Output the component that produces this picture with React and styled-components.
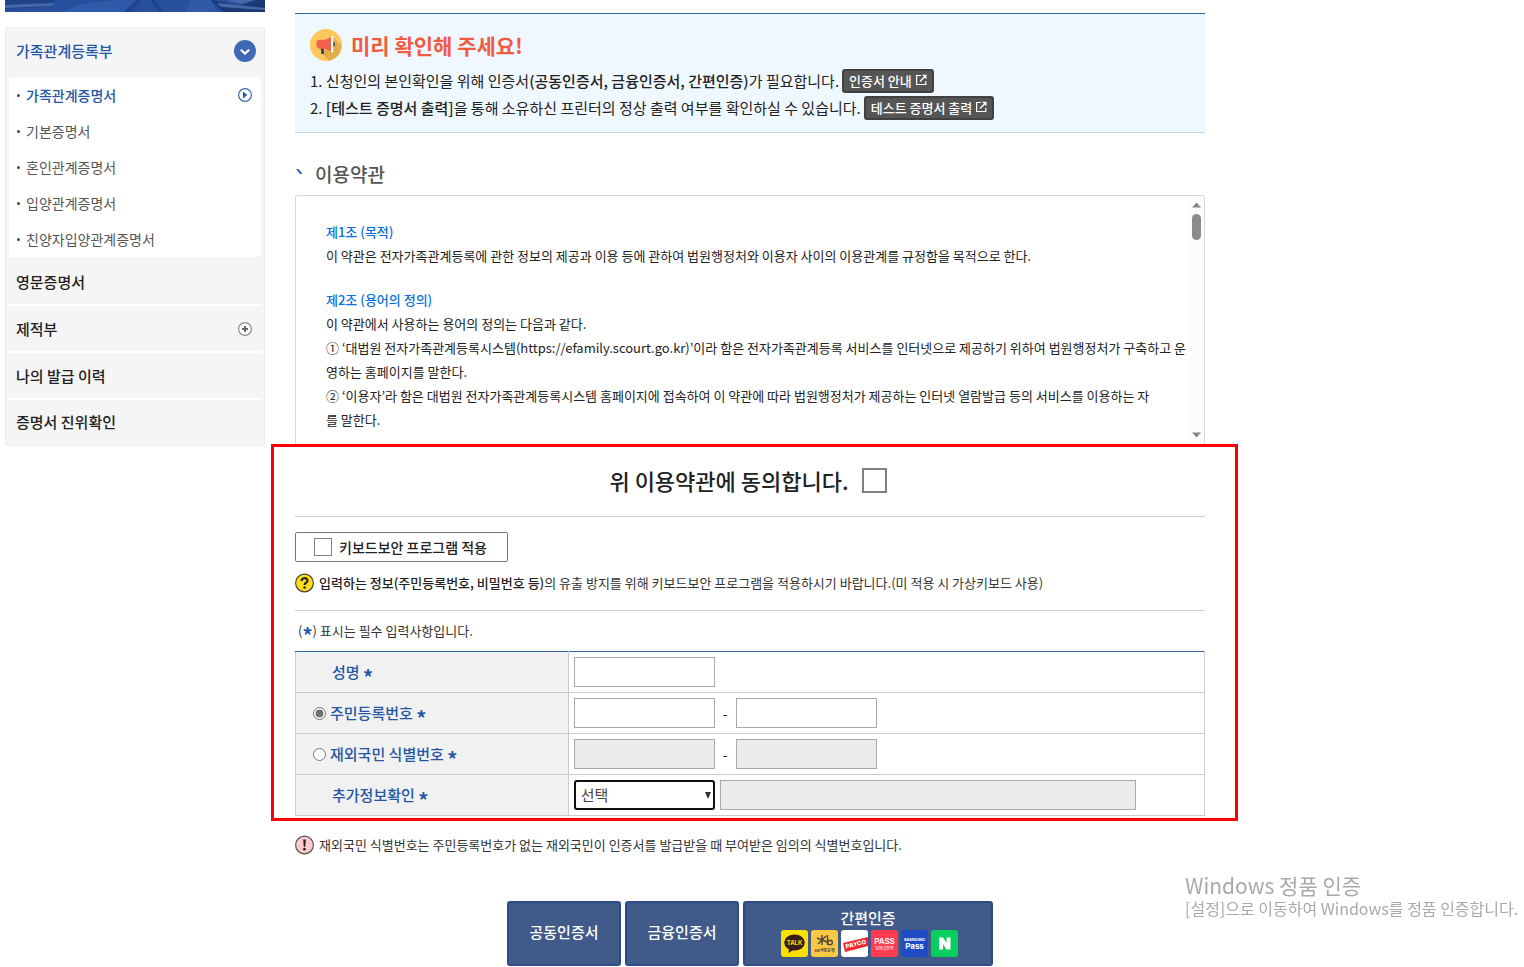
import React, { useState } from "react";
import styled, { createGlobalStyle } from "styled-components";

const blue = "#2456a4";
const line = "#cccccc";

const GlobalStyle = createGlobalStyle`
  * {
    box-sizing: border-box;
  }

  body {
    margin: 0;
    background: #ffffff;
    color: #222222;
    font-family: "Noto Sans CJK KR", "Noto Sans", sans-serif;
    font-size: 14px;
    line-height: 24px;
    word-break: break-all;
  }

  button,
  input,
  select {
    font: inherit;
    color: inherit;
  }

  ul,
  ol,
  h2,
  h3,
  p {
    margin: 0;
    padding: 0;
    list-style: none;
  }
`;

const Page = styled.div`
  display: flex;
  align-items: flex-start;
  gap: 30px;
  padding: 0 5px;
`;

/* ---------- sidebar ---------- */

const Sidebar = styled.aside`
  flex: 0 0 260px;
`;

const Banner = styled.svg`
  display: block;
  width: 100%;
  height: 12px;
  margin-bottom: 15px;
`;

const Menu = styled.nav`
  padding: 0 2px;
  border: 1px solid #eeeeee;
  background: #f5f5f5;
`;

const MenuLink = styled.a`
  display: flex;
  align-items: center;
  justify-content: space-between;
  height: ${(p) => (p.$open ? 49 : 47)}px;
  padding: ${(p) => (p.$open ? "0 6px 4px 8px" : "0 8px")};
  border-bottom: ${(p) => (p.$open ? "none" : "2px solid #ffffff")};
  color: ${(p) => (p.$open ? blue : "#222222")};
  font-size: 15px;
  font-weight: 500;
  text-decoration: none;
`;

const LastItem = styled.li`
  ${MenuLink} {
    height: 45px;
    padding-bottom: 2px;
    border-bottom: none;
  }
`;

const SubMenu = styled.ul`
  margin: 0 1px 2px;
  border-radius: 2px;
  background: #ffffff;
`;

const SubLink = styled.a`
  display: flex;
  align-items: center;
  height: 36px;
  padding: 0 9px 0 8px;
  color: ${(p) => (p.$active ? blue : "#555555")};
  font-weight: ${(p) => (p.$active ? 500 : 400)};
  text-decoration: none;

  &::before {
    content: "";
    width: 3px;
    height: 3px;
    margin-right: 6px;
    border-radius: 50%;
    background: #444444;
  }

  svg {
    margin-left: auto;
  }
`;

const PlusSlot = styled.span`
  display: flex;
  padding-right: 2px;
`;

/* ---------- content ---------- */

const Content = styled.main`
  flex: 0 1 910px;
  min-width: 0;
  padding-top: 13px;
`;

const Notice = styled.section`
  padding: 15px 15px 11px;
  border-top: 1px solid #3567a8;
  border-bottom: 1px solid #c6daef;
  background: #f0f8ff;
`;

const NoticeTitle = styled.h2`
  display: flex;
  align-items: center;
  gap: 9px;
  margin-bottom: 6px;
  color: #f15b40;
  font-size: 21px;
  font-weight: 700;
  line-height: 32px;
`;

const NoticeLine = styled.li`
  display: flex;
  align-items: center;
  gap: 3px;
  height: 27px;
  font-size: 15px;

  b {
    font-weight: 500;
  }
`;

const DarkButton = styled.button`
  display: inline-flex;
  align-items: center;
  gap: 4px;
  height: 24px;
  padding: 0 5px;
  border: 2px solid #414141;
  border-radius: 3px;
  background: #555555;
  color: #ffffff;
  font-size: 13px;
  font-weight: 500;
  line-height: 20px;
  white-space: nowrap;
`;

const SectionTitle = styled.h3`
  display: flex;
  gap: 13px;
  margin: 27px 0 7px;
  color: #555555;
  font-size: 19px;
  font-weight: 500;
  line-height: 28px;

  svg {
    margin: 9px 0 0 1px;
  }
`;

const Terms = styled.div`
  display: flex;
  height: 249px;
  border: 1px solid #d8d8d8;
  border-bottom: none;
  border-radius: 3px 3px 0 0;
`;

const TermsText = styled.div`
  flex: 1;
  padding: 24px 2px 0 30px;
  overflow: hidden;
  font-size: 13px;

  h3 {
    color: #0a6fe0;
    font-size: 13px;
    font-weight: 500;
  }

  p + h3 {
    margin-top: 20px;
  }
`;

const Rail = styled.div`
  display: flex;
  flex-direction: column;
  align-items: center;
  width: 15px;
  padding: 6px 0;
  background: #fcfcfc;
`;

const Thumb = styled.div`
  width: 9px;
  height: 26px;
  margin: 6px 0 auto;
  border-radius: 5px;
  background: #8b8b8b;
`;

const Highlight = styled.section`
  margin: 0 -33px 0 -24px;
  padding: 0 30px 2px 21px;
  border: 3px solid #fb0007;
`;

const Agree = styled.label`
  display: flex;
  align-items: center;
  justify-content: center;
  gap: 13px;
  height: 70px;
  padding: 0 4px 3px 0;
  border-bottom: 1px solid ${line};
  font-size: 22px;
  font-weight: 500;
`;

const Check = styled.input.attrs({ type: "checkbox" })`
  appearance: none;
  width: ${(p) => p.$size}px;
  height: ${(p) => p.$size}px;
  margin: 0;
  border: ${(p) => (p.$size > 20 ? 2 : 1)}px solid #808080;
  background: #ffffff;

  &:checked {
    background: ${blue};
  }
`;

const KeyboardOption = styled.label`
  display: inline-flex;
  align-items: center;
  gap: 7px;
  height: 30px;
  margin-top: 15px;
  padding: 0 20px 0 18px;
  border: 1px solid #767676;
  border-radius: 2px;
  font-weight: 500;
  vertical-align: top;
`;

const InfoLine = styled.p`
  display: flex;
  align-items: center;
  gap: 4px;
  color: #333333;
  font-size: 13px;
  line-height: 20px;

  b {
    color: #222222;
    font-weight: 500;
  }
`;

const KeyboardInfo = styled(InfoLine)`
  padding: 11px 0 17px;
  border-bottom: 1px solid ${line};
`;

const RequiredNote = styled.p`
  margin: 8px 0;
  padding-left: 3px;
  color: #333333;
  font-size: 13px;
`;

const StarMark = styled.span`
  color: ${blue};
  font-size: 20px;
  font-weight: 700;
  line-height: 0;
  vertical-align: -7px;
`;

const FormTable = styled.table`
  width: 100%;
  table-layout: fixed;
  border-collapse: collapse;
  border: 1px solid ${line};
  border-top-color: #3567a8;

  tr + tr > * {
    border-top: 1px solid ${line};
  }

  th {
    width: 30%;
    padding: 0 0 0 17px;
    border-right: 1px solid ${line};
    background: #f1f1f1;
    color: ${blue};
    font-size: 15px;
    font-weight: 500;
    text-align: left;
  }

  td {
    padding: 5px;
  }
`;

const HeadLabel = styled.label`
  display: flex;
  align-items: center;
  gap: 4px;
  padding-left: ${(p) => (p.$plain ? 19 : 0)}px;
`;

const Radio = styled.input.attrs({ type: "radio" })`
  width: 13px;
  height: 13px;
  margin: 0;
  accent-color: #707070;
`;

const Fields = styled.div`
  display: flex;
  align-items: center;
  gap: ${(p) => (p.$gap)}px;
`;

const TextBox = styled.input`
  flex: 0 1 ${(p) => (p.$wide ? 416 : 141)}px;
  min-width: 0;
  height: 30px;
  padding: 0 6px;
  border: 1px solid #a9a9a9;
  background: #ffffff;

  &:disabled {
    background: #ebebeb;
  }
`;

const SelectWrap = styled.div`
  position: relative;
  flex: 0 0 141px;

  svg {
    position: absolute;
    top: 12px;
    right: 4px;
    pointer-events: none;
  }
`;

const Select = styled.select`
  appearance: none;
  display: block;
  width: 100%;
  height: 30px;
  padding: 0 5px;
  border: 2px solid #101010;
  border-radius: 3px;
  outline: none;
  background: #ffffff;
  color: #444444;
  font-size: 15px;
`;

const ForeignInfo = styled(InfoLine)`
  margin-top: 14px;
`;

const Actions = styled.div`
  display: flex;
  justify-content: center;
  gap: 4px;
  margin-top: 46px;
`;

const ActionButton = styled.button`
  display: flex;
  flex-direction: column;
  align-items: center;
  justify-content: center;
  flex: 0 1 ${(p) => (p.$wide ? 250 : 114)}px;
  height: 65px;
  padding: 0 0 4px;
  border: 2px solid #2d4b86;
  border-radius: 3px;
  background: #405a8a;
  color: #ffffff;
  font-size: 15px;
  font-weight: 500;
`;

const Logos = styled.span`
  display: flex;
  gap: 3px;
  padding-left: 3px;
`;

const Watermark = styled.div`
  position: fixed;
  right: 4px;
  bottom: 47px;
  width: 335px;
  color: #a9a9a9;
  font-size: 16px;
  white-space: nowrap;
  pointer-events: none;

  strong {
    display: block;
    font-size: 21px;
    font-weight: 400;
    line-height: 22px;
  }
`;

/* ---------- icons ---------- */

const ChevronCircle = () => (
  <svg width="22" height="22" viewBox="0 0 22 22" aria-hidden="true">
    <circle cx="11" cy="11" r="11" fill="#3f68b5" />
    <path d="M6.8 9.8L11 13.6L15.2 9.8" fill="none" stroke="#fff" strokeWidth="2.2" />
  </svg>
);

const PlayCircle = () => (
  <svg width="14" height="14" viewBox="0 0 14 14" aria-hidden="true">
    <circle cx="7" cy="7" r="6.4" fill="#fff" stroke="#3f68b5" strokeWidth="1.2" />
    <path d="M5 3.5L9.3 7L5 10.5Z" fill={blue} />
  </svg>
);

const PlusCircle = () => (
  <svg width="14" height="14" viewBox="0 0 14 14" aria-hidden="true">
    <circle cx="7" cy="7" r="6.4" fill="#fff" stroke="#8c8c8c" strokeWidth="1.2" />
    <path d="M7 4V10M4 7H10" stroke="#666" strokeWidth="2" />
  </svg>
);

const Megaphone = () => (
  <svg width="32" height="32" viewBox="0 0 32 32" aria-hidden="true">
    <circle cx="16" cy="16" r="16" fill="#fdc75b" />
    <path d="M13 25L22 7L31.5 16.5A16 16 0 0 1 19 31.7Z" fill="#e3ae49" />
    <path d="M10.6 18H14V25H11.4Z" fill="#324a5e" />
    <path d="M22.5 12.5C26 13 26 17.6 22.5 18Z" fill="#324a5e" />
    <path d="M6.5 14C6.5 11.5 8 10.8 10 10.8H15L21 8V22.5L15 19.7H10C8 19.7 6.5 18.5 6.5 16.5Z" fill="#f1604a" />
    <path d="M21 7H23.3V23.2H21Z" fill="#fff" />
  </svg>
);

const External = () => (
  <svg width="11" height="13" viewBox="0 0 11 13" fill="none" stroke="#fff" aria-hidden="true">
    <path d="M5 1.5H.6V10.5H9.8V7" strokeWidth="1.2" />
    <path d="M4 7.5L9 2.5" strokeWidth="1.5" />
    <path d="M6 .8H10.5V5.3Z" fill="#fff" stroke="none" />
  </svg>
);

const TitleTick = () => (
  <svg width="6" height="5" viewBox="0 0 6 5" aria-hidden="true">
    <path d="M0 0H2.5L6 4V5H4Z" fill="#3567b5" />
  </svg>
);

const Triangle = ({ down }) => (
  <svg width="9" height="6" viewBox="0 0 9 6" aria-hidden="true">
    <path d={down ? "M0 .5H9L4.5 5.5Z" : "M0 5.5H9L4.5 .5Z"} fill="#868686" />
  </svg>
);

const QuestionIcon = () => (
  <svg width="20" height="20" viewBox="0 0 20 20" aria-hidden="true">
    <circle cx="9.5" cy="10" r="8.9" fill="#ffdc20" stroke="#4a4630" strokeWidth="1.2" />
    <path d="M6.5 8C6.5 4.3 12.6 4.3 12.6 7.6C12.6 9.7 9.6 9.5 9.6 12" fill="none" stroke="#222" strokeWidth="2.1" />
    <circle cx="9.6" cy="14.5" r="1.3" fill="#222" />
  </svg>
);

const AlertIcon = () => (
  <svg width="20" height="20" viewBox="0 0 20 20" aria-hidden="true">
    <circle cx="9.5" cy="10" r="8.9" fill="#fdcaca" stroke="#555" strokeWidth="1.2" />
    <path d="M8.2 4.5H10.9L10.3 11.8H8.8Z" fill="#222" />
    <circle cx="9.5" cy="14.2" r="1.4" fill="#222" />
  </svg>
);

const Logo = ({ color, children }) => (
  <svg width="27" height="27" viewBox="0 0 27 27" aria-hidden="true" fontFamily="Inter, 'Noto Sans CJK KR', sans-serif">
    <rect width="27" height="27" rx="3" fill={color} />
    {children}
  </svg>
);

const BannerArt = () => (
  <Banner viewBox="0 0 260 12" preserveAspectRatio="none" aria-hidden="true">
    <rect width="260" height="12" fill="#264f9c" />
    <path d="M0 0H52L40 7L0 9Z" fill="#1f4389" />
    <path d="M0 5L50 3L46 6L0 8Z" fill="#4668a8" />
    <path d="M58 12L75 4L110 0H130L118 12Z" fill="#2f5aa9" />
    <path d="M120 12L132 0H136L126 12ZM150 0L158 12H154L145 0Z" fill="#1f4389" />
    <path d="M180 12L186 0H206L212 12Z" fill="#305aa8" />
    <path d="M206 0L218 12H260V0H250L236 6Z" fill="#1a3873" />
    <path d="M212 3L260 8V10L216 7ZM222 0H250L236 4Z" fill="#4668a8" />
  </Banner>
);

const subItems = ["가족관계증명서", "기본증명서", "혼인관계증명서", "입양관계증명서", "친양자입양관계증명서"];

const Star = () => <StarMark>*</StarMark>;

const App = () => {
  const [idType, setIdType] = useState("resident");

  return (
    <>
      <GlobalStyle />
      <Page>
        <Sidebar>
          <BannerArt />
          <Menu>
            <ul>
              <li>
                <MenuLink href="#family" $open>
                  가족관계등록부
                  <ChevronCircle />
                </MenuLink>
                <SubMenu>
                  {subItems.map((name, i) => (
                    <li key={name}>
                      <SubLink href="#cert" $active={i === 0}>
                        {name}
                        {i === 0 && <PlayCircle />}
                      </SubLink>
                    </li>
                  ))}
                </SubMenu>
              </li>
              <li>
                <MenuLink href="#english">영문증명서</MenuLink>
              </li>
              <li>
                <MenuLink href="#removed">
                  제적부
                  <PlusSlot>
                    <PlusCircle />
                  </PlusSlot>
                </MenuLink>
              </li>
              <li>
                <MenuLink href="#history">나의 발급 이력</MenuLink>
              </li>
              <LastItem>
                <MenuLink href="#verify">증명서 진위확인</MenuLink>
              </LastItem>
            </ul>
          </Menu>
        </Sidebar>

        <Content>
          <Notice>
            <NoticeTitle>
              <Megaphone />
              미리 확인해 주세요!
            </NoticeTitle>
            <ol>
              <NoticeLine>
                <span>
                  1. 신청인의 본인확인을 위해 인증서<b>(공동인증서, 금융인증서, 간편인증)</b>가 필요합니다.
                </span>
                <DarkButton type="button">
                  인증서 안내 <External />
                </DarkButton>
              </NoticeLine>
              <NoticeLine>
                <span>
                  2. <b>[테스트 증명서 출력]</b>을 통해 소유하신 프린터의 정상 출력 여부를 확인하실 수 있습니다.
                </span>
                <DarkButton type="button">
                  테스트 증명서 출력 <External />
                </DarkButton>
              </NoticeLine>
            </ol>
          </Notice>

          <SectionTitle>
            <TitleTick />
            이용약관
          </SectionTitle>
          <Terms>
            <TermsText>
              <h3>제1조 (목적)</h3>
              <p>
                이 약관은 전자가족관계등록에 관한 정보의 제공과 이용 등에 관하여 법원행정처와 이용자 사이의
                이용관계를 규정함을 목적으로 한다.
              </p>
              <h3>제2조 (용어의 정의)</h3>
              <p>이 약관에서 사용하는 용어의 정의는 다음과 같다.</p>
              <p>
                ① ‘대법원 전자가족관계등록시스템(https://efamily.scourt.go.kr)’이라 함은 전자가족관계등록 서비스를
                인터넷으로 제공하기 위하여 법원행정처가 구축하고 운영하는 홈페이지를 말한다.
              </p>
              <p>
                ② ‘이용자’라 함은 대법원 전자가족관계등록시스템 홈페이지에 접속하여 이 약관에 따라
                법원행정처가 제공하는 인터넷 열람발급 등의 서비스를 이용하는 자
                <br />
                를 말한다.
              </p>
            </TermsText>
            <Rail aria-hidden="true">
              <Triangle />
              <Thumb />
              <Triangle down />
            </Rail>
          </Terms>

          <Highlight>
            <Agree>
              위 이용약관에 동의합니다.
              <Check $size={25} />
            </Agree>
            <KeyboardOption>
              <Check $size={18} />
              키보드보안 프로그램 적용
            </KeyboardOption>
            <KeyboardInfo>
              <QuestionIcon />
              <span>
                <b>입력하는 정보(주민등록번호, 비밀번호 등)</b>의 유출 방지를 위해 키보드보안 프로그램을 적용하시기
                바랍니다.(미 적용 시 가상키보드 사용)
              </span>
            </KeyboardInfo>
            <RequiredNote>
              (<Star />) 표시는 필수 입력사항입니다.
            </RequiredNote>

            <FormTable>
              <tbody>
                <tr>
                  <th scope="row">
                    <HeadLabel htmlFor="name" $plain>
                      <span>성명 <Star /></span>
                    </HeadLabel>
                  </th>
                  <td>
                    <Fields>
                      <TextBox id="name" />
                    </Fields>
                  </td>
                </tr>
                <tr>
                  <th scope="row">
                    <HeadLabel>
                      <Radio name="idType" checked={idType === "resident"} onChange={() => setIdType("resident")} />
                      <span>주민등록번호 <Star /></span>
                    </HeadLabel>
                  </th>
                  <td>
                    <Fields $gap={8}>
                      <TextBox aria-label="주민등록번호 앞자리" disabled={idType !== "resident"} />
                      -
                      <TextBox aria-label="주민등록번호 뒷자리" disabled={idType !== "resident"} />
                    </Fields>
                  </td>
                </tr>
                <tr>
                  <th scope="row">
                    <HeadLabel>
                      <Radio name="idType" checked={idType === "overseas"} onChange={() => setIdType("overseas")} />
                      <span>재외국민 식별번호 <Star /></span>
                    </HeadLabel>
                  </th>
                  <td>
                    <Fields $gap={8}>
                      <TextBox aria-label="식별번호 앞자리" disabled={idType !== "overseas"} />
                      -
                      <TextBox aria-label="식별번호 뒷자리" disabled={idType !== "overseas"} />
                    </Fields>
                  </td>
                </tr>
                <tr>
                  <th scope="row">
                    <HeadLabel htmlFor="extra" $plain>
                      <span>추가정보확인 <Star /></span>
                    </HeadLabel>
                  </th>
                  <td>
                    <Fields $gap={5}>
                      <SelectWrap>
                        <Select id="extra">
                          <option>선택</option>
                        </Select>
                        <svg width="6" height="6" viewBox="0 0 6 6" aria-hidden="true">
                          <path d="M0 0H6L3.5 6H2.5Z" fill="#333" />
                        </svg>
                      </SelectWrap>
                      <TextBox $wide aria-label="추가정보" disabled />
                    </Fields>
                  </td>
                </tr>
              </tbody>
            </FormTable>
          </Highlight>

          <ForeignInfo>
            <AlertIcon />
            재외국민 식별번호는 주민등록번호가 없는 재외국민이 인증서를 발급받을 때 부여받은 임의의 식별번호입니다.
          </ForeignInfo>

          <Actions>
            <ActionButton type="button">공동인증서</ActionButton>
            <ActionButton type="button">금융인증서</ActionButton>
            <ActionButton type="button" $wide>
              간편인증
              <Logos>
                <Logo color="#f9e000">
                  <ellipse cx="13.5" cy="12.5" rx="10.3" ry="8" fill="#3c1e1e" />
                  <path d="M8 18L7.5 23L13 19.5Z" fill="#3c1e1e" />
                  <text x="13.5" y="15" textAnchor="middle" fontSize="6" fontWeight="700" fill="#f9e000">TALK</text>
                </Logo>
                <Logo color="#fbc843">
                  <path d="M11 5V15M6 8L16 12M15 6L7 14M16.5 5V15" stroke="#51493c" strokeWidth="1.5" />
                  <circle cx="19" cy="12.5" r="2.3" fill="none" stroke="#51493c" strokeWidth="1.5" />
                  <text x="13.5" y="22" textAnchor="middle" fontSize="4" fontWeight="700" fill="#51493c">KB국민은행</text>
                </Logo>
                <Logo color="#ffffff">
                  <path d="M2 13L27 7V16L4 22Z" fill="#f8232b" />
                  <text x="5" y="18.5" fontSize="6" fontWeight="800" fill="#fff" transform="rotate(-13 5 18)">PAYCO</text>
                </Logo>
                <Logo color="#ff3d4f">
                  <text x="13.5" y="14" textAnchor="middle" fontSize="8" fontWeight="600" fill="#fff">PASS</text>
                  <text x="13.5" y="20" textAnchor="middle" fontSize="4" fill="#fff">모바일인증</text>
                </Logo>
                <Logo color="#1f4bc6">
                  <text x="13.5" y="11" textAnchor="middle" fontSize="4" fontWeight="700" fill="#fff">SAMSUNG</text>
                  <text x="13.5" y="18.5" textAnchor="middle" fontSize="8" fontWeight="700" fill="#fff">Pass</text>
                </Logo>
                <Logo color="#08ce5f">
                  <path d="M8 7.5H12L15.5 13V7.5H19.5V19.5H15.5L12 14V19.5H8Z" fill="#fff" />
                </Logo>
              </Logos>
            </ActionButton>
          </Actions>
        </Content>
      </Page>

      <Watermark>
        <strong>Windows 정품 인증</strong>
        [설정]으로 이동하여 Windows를 정품 인증합니다.
      </Watermark>
    </>
  );
};

export default App;
